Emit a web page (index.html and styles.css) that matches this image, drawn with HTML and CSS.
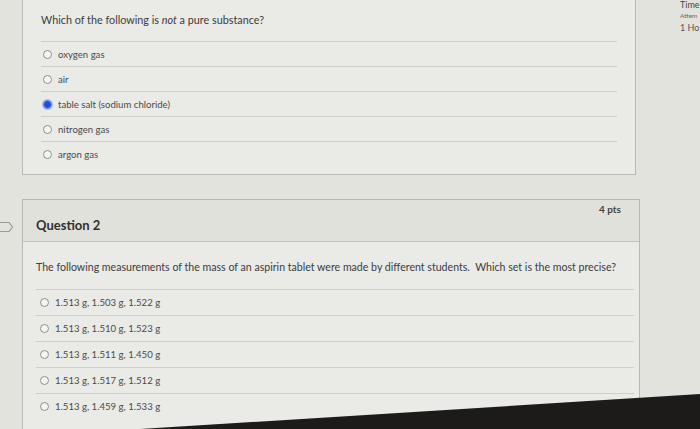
FILE: index.html
```html
<!DOCTYPE html>
<html>
<head>
<meta charset="utf-8">
<link rel="stylesheet" href="styles.css">
</head>
<body>
<div class="page">
  <div class="main">
    <section class="card card-one">
      <p class="q-text">Which of the following is <em>not</em> a pure substance?</p>
      <ul class="answers">
        <li class="answer"><span class="radio"></span>oxygen gas</li>
        <li class="answer"><span class="radio"></span>air</li>
        <li class="answer"><span class="radio checked"></span>table salt (sodium chloride)</li>
        <li class="answer"><span class="radio"></span>nitrogen gas</li>
        <li class="answer"><span class="radio"></span>argon gas</li>
      </ul>
    </section>

    <section class="card card-two">
      <svg class="flag" width="14" height="12" viewBox="0 0 14 12"><path d="M-2 1.5 H9 L12.5 6 L9 10.5 H-2" fill="none" stroke="#9a9a96" stroke-width="1.2"/></svg>
      <header class="q-header">
        <h2 class="q-title">Question 2</h2>
        <span class="pts">4 pts</span>
      </header>
      <div class="q-body">
        <p class="q-text2">The following measurements of the mass of an aspirin tablet were made by different students.&nbsp; Which set is the most precise?</p>
        <ul class="answers answers2">
          <li class="answer"><span class="radio"></span>1.513 g, 1.503 g, 1.522 g</li>
          <li class="answer"><span class="radio"></span>1.513 g, 1.510 g, 1.523 g</li>
          <li class="answer"><span class="radio"></span>1.513 g, 1.511 g, 1.450 g</li>
          <li class="answer"><span class="radio"></span>1.513 g, 1.517 g, 1.512 g</li>
          <li class="answer"><span class="radio"></span>1.513 g, 1.459 g, 1.533 g</li>
        </ul>
      </div>
    </section>
  </div>
  <aside class="side">
    <div class="side-time">Time</div>
    <div class="side-att">Attem</div>
    <div class="side-hr">1 Ho</div>
  </aside>
</div>
<div class="bezel"></div>
</body>
</html>
```
FILE: styles.css
```css
html, body {
  margin: 0;
  padding: 0;
  width: 700px;
  height: 429px;
  overflow: hidden;
  background: #e3e3de;
  font-family: Lato, "Open Sans", sans-serif;
  color: #3a3a3a;
}
.page {
  display: flex;
  width: 700px;
  height: 429px;
}
.main {
  width: 658px;
  flex: none;
  padding-left: 22px;
  display: flex;
  flex-direction: column;
}
.card {
  flex: none;
  width: 614px;
  background: #eaeae6;
  border: 1px solid #b9b9b4;
  box-sizing: border-box;
  position: relative;
}
.card-one {
  border-top: none;
  height: 175px;
  padding: 13px 0 0 18px;
}
.q-text {
  margin: 0;
  font-size: 10.8px;
  line-height: 14px;
  color: #3c3c3c;
}
.answers {
  list-style: none;
  margin: 14px 0 0 0;
  padding: 0;
  width: 576px;
}
.answer {
  display: flex;
  align-items: center;
  height: 24px;
  border-top: 1px solid #cfcfca;
  font-size: 9.6px;
  color: #4a4a4a;
  padding-left: 2px;
}
.radio {
  width: 7px;
  height: 7px;
  border: 1px solid #8f8f8c;
  border-radius: 50%;
  background: #f4f4f1;
  margin-right: 6px;
  flex: none;
}
.radio.checked {
  background: #1f4fd6;
  border-color: #7f9be8;
  box-shadow: 0 0 0 1px #a9bdf0;
}
.card-two {
  margin-top: 24px;
  width: 618px;
  height: 230px;
  border-bottom: none;
  overflow: visible;
}
.flag {
  position: absolute;
  left: -23px;
  top: 21px;
}
.q-header {
  height: 42px;
  background: #e1e1dc;
  border-bottom: 1px solid #c4c4bf;
  display: flex;
  justify-content: space-between;
  align-items: flex-start;
  padding: 0 18px 0 13px;
  box-sizing: border-box;
}
.q-title {
  margin: 17px 0 0 0;
  font-size: 13px;
  font-weight: 700;
  color: #2f2f2f;
}
.pts {
  margin-top: 3px;
  font-size: 10px;
  font-weight: 700;
  color: #444;
}
.q-body {
  padding: 18px 0 0 13px;
}
.q-text2 {
  margin: 0;
  font-size: 10.6px;
  line-height: 14px;
  color: #3c3c3c;
  white-space: nowrap;
}
.answers2 {
  margin-top: 15px;
  width: 598px;
}
.answers2 .answer {
  height: 25px;
  font-size: 9.6px;
  padding-left: 4px;
}
.side {
  flex: 1;
  color: #555;
  white-space: nowrap;
}
.side-time {
  font-size: 9px;
  line-height: 10px;
  color: #444;
}
.side-att {
  font-size: 6.5px;
  margin-top: 2px;
  color: #666;
}
.side-hr {
  font-size: 9px;
  margin-top: 3px;
  color: #555;
}
.bezel {
  position: absolute;
  left: 0;
  top: 0;
  width: 700px;
  height: 429px;
  background: #1d1a1a;
  clip-path: polygon(140px 429px, 700px 394px, 700px 429px);
  pointer-events: none;
}
```
